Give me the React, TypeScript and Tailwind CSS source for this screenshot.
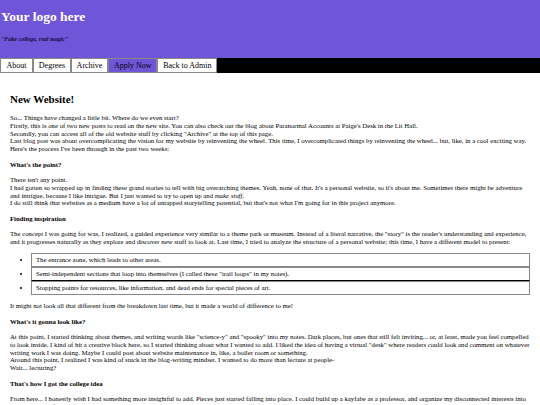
const navItems = ['About', 'Degrees', 'Archive', 'Apply Now', 'Back to Admin'];

function NavBar() {
  return (
    <nav className="flex h-[15px] bg-black">
      {navItems.map((item, i) => (
        <a
          key={item}
          className={
            'flex items-center border border-[#888] text-[8px] leading-none text-black ' +
            (i === 0 ? 'px-[5.5px] ' : 'px-[4.8px] ') +
            (item === 'Apply Now' ? 'bg-[#6f56d8] border-[#4b3aa0]' : 'bg-white')
          }
        >
          {item}
        </a>
      ))}
    </nav>
  );
}

export default function App() {
  return (
    <div className="min-h-screen bg-white font-['Liberation_Serif',serif] text-black">
      <header className="h-[58px] bg-[#6f56d8] pl-px pt-[10px]">
        <h1 className="text-[13.5px] font-bold leading-none text-white">Your logo here</h1>
        <p className="mt-[12px] text-[6px] font-bold italic leading-none text-[#140a3a]">"Fake college, real magic"</p>
      </header>
      <NavBar />

      <main className="px-[10px] pt-[21px] text-[6.75px] leading-[7.8px]">
        <h2 className="mb-[9px] text-[11px] font-bold leading-none">New Website!</h2>
        <p>
          So... Things have changed a little bit. Where do we even start?
          <br />
          Firstly, this is one of two new posts to read on the new site. You can also check out the blog about Paranormal Accounts at Paige's Desk in the Lit Hall.
          <br />
          Secondly, you can access all of the old website stuff by clicking "Archive" at the top of this page.
          <br />
          Last blog post was about overcomplicating the vision for my website by reinventing the wheel. This time, I overcomplicated things by reinventing the wheel... but, like, in a cool exciting way.
          <br />
          Here's the process I've been through in the past two weeks:
        </p>

        <h3 className="my-[7.6px] font-bold">What's the point?</h3>
        <p>
          There isn't any point.
          <br />
          I had gotten so wrapped up in finding these grand stories to tell with big overarching themes. Yeah, none of that. It's a personal website, so it's about me. Sometimes there might be adventure
          <br />
          and intrigue, because I like intrigue. But I just wanted to try to open up and <i>make stuff</i>.
          <br />
          I do still think that websites as a medium have a lot of untapped storytelling potential, but that's not what I'm going for in this project anymore.
        </p>

        <h3 className="my-[7.6px] font-bold">Finding inspiration</h3>
        <p>
          The concept I was going for was, I realized, a guided experience very similar to a theme park or museum. Instead of a literal narrative, the "story" is the reader's understanding and experience,
          <br />
          and it progresses naturally as they explore and discover new stuff to look at. Last time, I tried to analyze the structure of a personal website; this time, I have a different model to present:
        </p>

        <ul className="my-[7.6px] list-disc pl-[21px]">
          <li className="border border-[#888] px-[4px] py-[2px]">The entrance zone, which leads to other areas.</li>
          <li className="border border-[#888] border-b-black px-[4px] py-[2px]">Semi-independent sections that loop into themselves (I called these "trail loops" in my notes).</li>
          <li className="border border-[#888] px-[4px] py-[2px]">Stopping points for resources, like information, and dead ends for special pieces of art.</li>
        </ul>

        <p>It might not look all that different from the breakdown last time, but it made a world of difference to me!</p>

        <h3 className="my-[7.6px] font-bold">What's it gonna look like?</h3>
        <p>
          At this point, I started thinking about themes, and writing words like "science-y" and "spooky" into my notes. Dark places, but ones that still felt inviting... or, at least, made you feel compelled
          <br />
          to look inside. I kind of hit a creative block here, so I started thinking about what I wanted to add. I liked the idea of having a virtual "desk" where readers could look and comment on whatever
          <br />
          writing work I was doing. Maybe I could post about website maintenance in, like, a boiler room or something.
          <br />
          Around this point, I realized I was kind of stuck in the blog-writing mindset. I wanted to do more than lecture at people-
          <br />
          Wait... lecturing?
        </p>

        <h3 className="my-[7.6px] font-bold">That's how I got the college idea</h3>
        <p>
          From here... I honestly wish I had something more insightful to add. Pieces just started falling into place. I could build up a kayfabe as a professor, and organize my disconnected interests into
          <br />
          zones based on fields of study. Wizard schools are already a pretty well-established idea (though, that might not be a strictly good thing), so there's a lot of ground to explore thematically.
        </p>
      </main>
    </div>
  );
}
